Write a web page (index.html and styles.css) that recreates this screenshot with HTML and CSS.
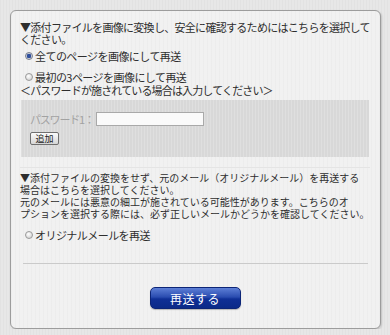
FILE: index.html
```html
<!DOCTYPE html>
<html lang="ja">
<head>
    <meta charset="UTF-8">
    <meta name="viewport" content="width=device-width, initial-scale=1.0">
    <title>再送</title>
    <link rel="stylesheet" href="styles.css">
</head>
<body>
    <div class="panel">
        <p class="lead">▼添付ファイルを画像に変換し、安全に確認するためにはこちらを選択して<br>ください。</p>

        <label class="choice first">
            <span class="radio checked"></span>
            <span>全てのページを画像にして再送</span>
        </label>
        <label class="choice second">
            <span class="radio"></span>
            <span>最初の3ページを画像にして再送</span>
        </label>

        <p class="note">＜パスワードが施されている場合は入力してください＞</p>

        <div class="pw-box">
            <div class="pw-row">
                <span class="pw-label">パスワード1：</span>
                <input type="text" class="pw-input">
            </div>
            <button type="button" class="add-btn">追加</button>
        </div>

        <div class="section">
            <p class="lead dense">▼添付ファイルの変換をせず、元のメール（オリジナルメール）を再送する<br>場合はこちらを選択してください。<br>元のメールには悪意の細工が施されている可能性があります。こちらのオ<br>プションを選択する際には、必ず正しいメールかどうかを確認してください。</p>

            <label class="choice third">
                <span class="radio"></span>
                <span>オリジナルメールを再送</span>
            </label>
        </div>

        <hr class="divider">

        <div class="actions">
            <button type="button" class="resend">再送する</button>
        </div>
    </div>
</body>
</html>
```

FILE: styles.css
```css
:root{
    --fundo : #e7e7e7;
    --painel : #f1f1f1;
    --texto : #2e2e2e;
    --cinza : #d8d8d8;
}

body {
    margin: 0;
    padding: 10px 0 0 10px;
    background-color: var(--fundo);
    background-image: repeating-linear-gradient(90deg, rgba(0, 0, 0, 0.025) 0 1px, transparent 1px 3px);
    font-family: "Noto Sans CJK JP", "Noto Sans", sans-serif;
    color: var(--texto);
}

.panel {
    box-sizing: border-box;
    width: 371px;
    height: 319px;
    padding: 10px 10px 0 9px;
    background-color: var(--painel);
    background-image: repeating-linear-gradient(90deg, rgba(0, 0, 0, 0.02) 0 1px, transparent 1px 4px);
    border: 1px solid #9c9c9c;
    border-radius: 6px;
    box-shadow: 1px 1px 2px rgba(0, 0, 0, 0.15);
}

p {
    margin: 0;
}

.lead {
    font-size: 11px;
    line-height: 12px;
    letter-spacing: -0.7px;
    white-space: nowrap;
}

.lead.dense {
    font-size: 10px;
    line-height: 12px;
    letter-spacing: 0;
}

.choice {
    display: flex;
    align-items: center;
    height: 14px;
    font-size: 11px;
    line-height: 14px;
    letter-spacing: -0.55px;
    white-space: nowrap;
}

.choice.first {
    margin-top: 4px;
}

.choice.second {
    margin-top: 7px;
}

.choice.third {
    margin-top: 8px;
}

.radio {
    box-sizing: border-box;
    width: 8px;
    height: 8px;
    margin: 0 2px 0 5px;
    border-radius: 50%;
    border: 1px solid #9a9a9a;
    background: radial-gradient(circle at 40% 35%, #ffffff, #c9c9c9);
    flex-shrink: 0;
}

.radio.checked {
    border-color: #7a7f8c;
    background: radial-gradient(circle, #2f4f9c 0 2px, #c8cdd8 2.5px);
}

.note {
    font-size: 11px;
    line-height: 12px;
    letter-spacing: -0.85px;
    white-space: nowrap;
}

.pw-box {
    margin: 4px 1px 0 1px;
    height: 57px;
    box-sizing: border-box;
    padding: 12px 10px 0 9px;
    background-color: var(--cinza);
    background-image: repeating-linear-gradient(90deg, rgba(255, 255, 255, 0.18) 0 1px, transparent 1px 3px);
}

.pw-row {
    display: flex;
    align-items: center;
    gap: 2px;
    height: 14px;
}

.pw-label {
    font-size: 11px;
    letter-spacing: -1.2px;
    color: #a2a2a2;
    white-space: nowrap;
}

.pw-input {
    box-sizing: border-box;
    width: 108px;
    height: 14px;
    padding: 0;
    border: 1px solid #a9a9a9;
    background: #fafafa;
}

.add-btn {
    display: block;
    box-sizing: border-box;
    margin-top: 6px;
    width: 29px;
    height: 13px;
    padding: 0;
    font-family: inherit;
    font-size: 9px;
    line-height: 11px;
    color: #222;
    border: 1px solid #6f6f6f;
    border-radius: 2px;
    background: linear-gradient(#fbfbfb, #d6d6d6);
}

.section {
    margin-top: 10px;
    padding-top: 4px;
    border-top: 1px solid #e4e4e4;
}

.divider {
    margin: 21px 2px 0 3px;
    border: none;
    border-top: 1px solid #cacaca;
}

.actions {
    display: flex;
    justify-content: center;
    padding-top: 23px;
}

.resend {
    box-sizing: border-box;
    width: 91px;
    height: 22px;
    padding: 0;
    font-family: inherit;
    font-size: 12px;
    letter-spacing: 0.5px;
    color: #ffffff;
    border: 1px solid #0c2577;
    border-radius: 5px;
    background: linear-gradient(#5d7fd6 0%, #2a4cb0 45%, #0f2f96 55%, #0b2a88 100%);
    box-shadow: 0 1px 1px rgba(0, 0, 0, 0.25);
    cursor: pointer;
}
```
